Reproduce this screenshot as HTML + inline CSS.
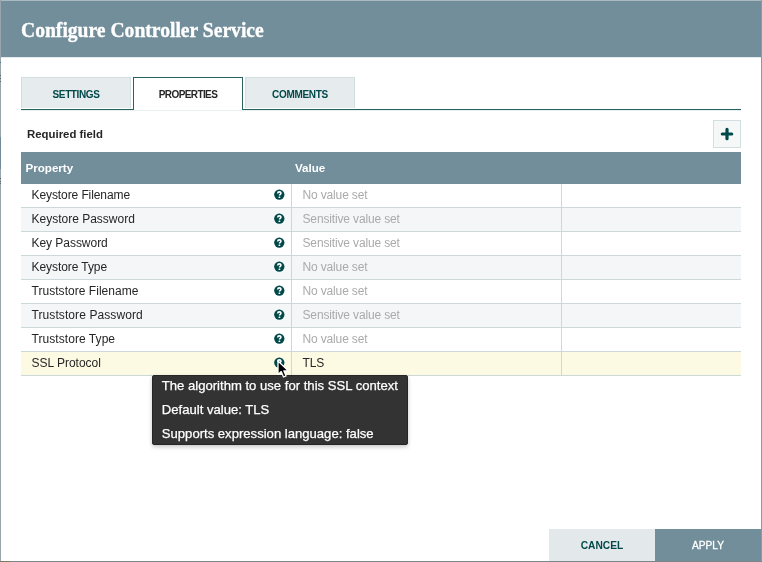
<!DOCTYPE html>
<html><head><meta charset="utf-8">
<style>
html,body{margin:0;padding:0;}
body{width:762px;height:562px;position:relative;overflow:hidden;background:#fff;will-change:transform;font-family:"Liberation Sans",sans-serif;}
.abs{position:absolute;}
#bt{left:0;top:0;width:762px;height:1px;background:#aab8c0;}
#bl{left:0;top:0;width:1px;height:562px;background:#98a5ac;}
#br{left:761px;top:0;width:1px;height:562px;background:#8d9aa1;}
#bb{left:0;top:561px;width:762px;height:1px;background:#7b858a;}
#hdr{left:1px;top:1px;width:760px;height:56px;background:#728e9b;box-shadow:0 1px 0 #e4e9eb;}
#title{left:20.6px;top:18px;font-family:"Liberation Serif",serif;font-weight:700;font-size:20.5px;transform:scaleX(0.956);-webkit-text-stroke:0.35px #fff;transform-origin:0 0;color:#fff;white-space:nowrap;line-height:24px;}
.tab{top:77px;height:30px;width:108px;background:#e6ebed;border:1px solid #d3dede;border-bottom:none;text-align:center;font-weight:700;font-size:10px;letter-spacing:-0.4px;color:#004849;line-height:33px;}
.tab.sel{background:#fff;border:1px solid #266262;border-bottom:none;color:#262626;height:32px;}
#tabline{left:21px;top:109px;width:720px;height:1px;background:#266262;box-shadow:0 1px 0 #e9efef;}
#req{left:27px;top:126px;font-weight:700;font-size:11.4px;color:#262626;white-space:nowrap;line-height:16px;}
#add{left:713px;top:120px;width:26px;height:26px;border:1px solid #d2dfe0;background:#f6f8f8;}
#thead{left:21px;top:152px;width:720px;height:32px;background:#728e9b;color:#fff;font-weight:700;font-size:11.6px;}
#thead .h1{position:absolute;left:4.5px;top:8px;line-height:16px;}
#thead .h2{position:absolute;left:274px;top:8px;line-height:16px;}
.row{left:21px;width:720px;height:23px;border-bottom:1px solid #cdd8da;background:#fff;font-size:12px;letter-spacing:-0.15px;color:#262626;}
.row.odd{background:#f4f6f7;}
.row.selr{background:#fdfae4;}
.pn{position:absolute;left:10.5px;top:3px;line-height:16px;white-space:nowrap;}
.pv{position:absolute;left:281.5px;top:3px;line-height:16px;white-space:nowrap;}
.pv.unset{color:#aaaaaa;}
.d1{position:absolute;left:270px;top:0;width:1px;height:24px;background:#cdd8da;}
.d2{position:absolute;left:540px;top:0;width:1px;height:24px;background:#cdd8da;}
.help{position:absolute;left:253px;top:5px;width:11px;height:11px;}
.help svg{display:block;}
#tip{left:152px;top:375px;width:254px;height:68px;background:#333333;border:1px solid #262626;border-radius:2px;box-shadow:0 2px 4px rgba(0,0,0,0.22);color:#fff;font-size:13.1px;-webkit-text-stroke:0.25px #fff;}
#tip div{position:absolute;left:8.8px;white-space:nowrap;line-height:16px;}
.btn{top:529px;height:32px;font-size:10.2px;text-align:center;line-height:34px;}
#cancel{left:549px;width:106px;background:#e3e8eb;color:#004849;font-weight:700;}
#apply{left:655px;width:106px;background:#728e9b;color:#fff;-webkit-text-stroke:0.3px #fff;}
</style></head><body>
<div class="abs" id="hdr"></div>
<div class="abs" id="title">Configure Controller Service</div>

<div class="abs" id="tabline"></div>
<div class="abs tab" style="left:21px;">SETTINGS</div>
<div class="abs tab sel" style="left:133px;letter-spacing:-0.6px;">PROPERTIES</div>
<div class="abs tab" style="left:245px;letter-spacing:-0.3px;">COMMENTS</div>

<div class="abs" id="req">Required field</div>
<div class="abs" id="add"><svg width="26" height="26" viewBox="0 0 26 26"><path d="M13 8.3V17.7M8.3 13H17.7" stroke="#004849" stroke-width="3.2" stroke-linecap="round" fill="none"/></svg></div>

<div class="abs" id="thead"><div class="h1">Property</div><div class="h2">Value</div></div>
<div class="abs row" style="top:184px"><div class="pn" style="letter-spacing:-0.09px">Keystore Filename</div><div class="help"><svg width="11" height="11" viewBox="0 0 11 11"><circle cx="5.3" cy="5.6" r="5.15" fill="#004849"/><path d="M3.7 4.5C3.7 3.5 4.4 2.9 5.3 2.9C6.3 2.9 7 3.5 7 4.3C7 5.2 5.7 5.4 5.4 6.4" stroke="#fff" stroke-width="1.6" fill="none"/><rect x="4.6" y="7.5" width="1.6" height="1.5" fill="#fff"/></svg></div><div class="pv unset">No value set</div><div class="d1"></div><div class="d2"></div></div>
<div class="abs row odd" style="top:208px"><div class="pn" style="letter-spacing:0.0px">Keystore Password</div><div class="help"><svg width="11" height="11" viewBox="0 0 11 11"><circle cx="5.3" cy="5.6" r="5.15" fill="#004849"/><path d="M3.7 4.5C3.7 3.5 4.4 2.9 5.3 2.9C6.3 2.9 7 3.5 7 4.3C7 5.2 5.7 5.4 5.4 6.4" stroke="#fff" stroke-width="1.6" fill="none"/><rect x="4.6" y="7.5" width="1.6" height="1.5" fill="#fff"/></svg></div><div class="pv unset">Sensitive value set</div><div class="d1"></div><div class="d2"></div></div>
<div class="abs row" style="top:232px"><div class="pn" style="letter-spacing:-0.04px">Key Password</div><div class="help"><svg width="11" height="11" viewBox="0 0 11 11"><circle cx="5.3" cy="5.6" r="5.15" fill="#004849"/><path d="M3.7 4.5C3.7 3.5 4.4 2.9 5.3 2.9C6.3 2.9 7 3.5 7 4.3C7 5.2 5.7 5.4 5.4 6.4" stroke="#fff" stroke-width="1.6" fill="none"/><rect x="4.6" y="7.5" width="1.6" height="1.5" fill="#fff"/></svg></div><div class="pv unset">Sensitive value set</div><div class="d1"></div><div class="d2"></div></div>
<div class="abs row odd" style="top:256px"><div class="pn" style="letter-spacing:-0.075px">Keystore Type</div><div class="help"><svg width="11" height="11" viewBox="0 0 11 11"><circle cx="5.3" cy="5.6" r="5.15" fill="#004849"/><path d="M3.7 4.5C3.7 3.5 4.4 2.9 5.3 2.9C6.3 2.9 7 3.5 7 4.3C7 5.2 5.7 5.4 5.4 6.4" stroke="#fff" stroke-width="1.6" fill="none"/><rect x="4.6" y="7.5" width="1.6" height="1.5" fill="#fff"/></svg></div><div class="pv unset">No value set</div><div class="d1"></div><div class="d2"></div></div>
<div class="abs row" style="top:280px"><div class="pn" style="letter-spacing:0.04px">Truststore Filename</div><div class="help"><svg width="11" height="11" viewBox="0 0 11 11"><circle cx="5.3" cy="5.6" r="5.15" fill="#004849"/><path d="M3.7 4.5C3.7 3.5 4.4 2.9 5.3 2.9C6.3 2.9 7 3.5 7 4.3C7 5.2 5.7 5.4 5.4 6.4" stroke="#fff" stroke-width="1.6" fill="none"/><rect x="4.6" y="7.5" width="1.6" height="1.5" fill="#fff"/></svg></div><div class="pv unset">No value set</div><div class="d1"></div><div class="d2"></div></div>
<div class="abs row odd" style="top:304px"><div class="pn" style="letter-spacing:0.09px">Truststore Password</div><div class="help"><svg width="11" height="11" viewBox="0 0 11 11"><circle cx="5.3" cy="5.6" r="5.15" fill="#004849"/><path d="M3.7 4.5C3.7 3.5 4.4 2.9 5.3 2.9C6.3 2.9 7 3.5 7 4.3C7 5.2 5.7 5.4 5.4 6.4" stroke="#fff" stroke-width="1.6" fill="none"/><rect x="4.6" y="7.5" width="1.6" height="1.5" fill="#fff"/></svg></div><div class="pv unset">Sensitive value set</div><div class="d1"></div><div class="d2"></div></div>
<div class="abs row" style="top:328px"><div class="pn" style="letter-spacing:0.06px">Truststore Type</div><div class="help"><svg width="11" height="11" viewBox="0 0 11 11"><circle cx="5.3" cy="5.6" r="5.15" fill="#004849"/><path d="M3.7 4.5C3.7 3.5 4.4 2.9 5.3 2.9C6.3 2.9 7 3.5 7 4.3C7 5.2 5.7 5.4 5.4 6.4" stroke="#fff" stroke-width="1.6" fill="none"/><rect x="4.6" y="7.5" width="1.6" height="1.5" fill="#fff"/></svg></div><div class="pv unset">No value set</div><div class="d1"></div><div class="d2"></div></div>
<div class="abs row odd selr" style="top:352px"><div class="pn" style="letter-spacing:-0.02px">SSL Protocol</div><div class="help"><svg width="11" height="11" viewBox="0 0 11 11"><circle cx="5.3" cy="5.6" r="5.15" fill="#004849"/><path d="M3.7 4.5C3.7 3.5 4.4 2.9 5.3 2.9C6.3 2.9 7 3.5 7 4.3C7 5.2 5.7 5.4 5.4 6.4" stroke="#fff" stroke-width="1.6" fill="none"/><rect x="4.6" y="7.5" width="1.6" height="1.5" fill="#fff"/></svg></div><div class="pv">TLS</div><div class="d1"></div><div class="d2"></div></div>


<div class="abs" id="tip">
<div style="top:2px">The algorithm to use for this SSL context</div>
<div style="top:26px">Default value: TLS</div>
<div style="top:50px">Supports expression language: false</div>
</div>

<svg class="abs" style="left:276.2px;top:358.5px" width="16" height="22" viewBox="0 0 16 22"><path d="M2 2L2 15.4L5.2 12.6L7.5 18L10.1 16.9L7.9 11.9L12.3 11.9Z" fill="#000" stroke="#fff" stroke-width="1.3" stroke-linejoin="round"/></svg>
<div class="abs btn" id="cancel">CANCEL</div>
<div class="abs btn" id="apply">APPLY</div>

<div class="abs" id="bt"></div>
<div class="abs" id="bl"></div>
<div class="abs" id="br"></div>
<div class="abs" id="bb"></div>
<div class="abs" style="left:0;top:62px;width:1px;height:1px;background:#4a7177;"></div><div class="abs" style="left:0;top:75px;width:1px;height:1px;background:#5a686d;"></div><div class="abs" style="left:0;top:78px;width:1px;height:1px;background:#5a686d;"></div><div class="abs" style="left:0;top:81px;width:1px;height:1px;background:#5a686d;"></div><div class="abs" style="left:0;top:178px;width:1px;height:1px;background:#5a686d;"></div><div class="abs" style="left:0;top:181px;width:1px;height:1px;background:#5a686d;"></div><div class="abs" style="left:0;top:183px;width:1px;height:1px;background:#5a686d;"></div>
<div class="abs" style="left:0;top:137px;width:1px;height:32px;background:#6f8b98;"></div>
<div class="abs" style="left:0;top:561px;width:10px;height:1px;background:#7f7a5a;"></div>
</body></html>
